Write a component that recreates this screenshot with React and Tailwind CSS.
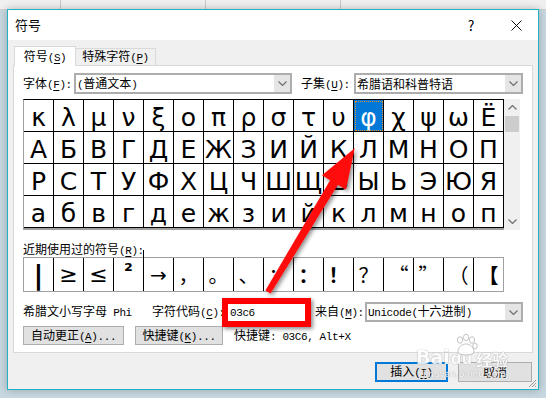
import React from 'react'

const cjk = "font-['Noto_Sans_CJK_SC',sans-serif]"
const glyph = "font-['DejaVu_Sans','Noto_Sans_CJK_SC',sans-serif]"

// CJK runs stay in the CJK face, ASCII runs get a narrow mono face; "~X" underlines X
function Txt({ t }) {
  const parts = t.split(/([\x20-\x7e]+)/).filter(Boolean)
  return (
    <span className="whitespace-pre">
      {parts.map((p, i) =>
        /^[\x20-\x7e]+$/.test(p) ? (
          <span key={i} className="font-['Liberation_Mono',monospace] text-[11px] tracking-[-0.4px]">
            {p.split(/(~.)/).filter(Boolean).map((q, j) =>
              q[0] === '~' ? (
                <span key={j} className="underline underline-offset-2">{q[1]}</span>
              ) : (
                q
              )
            )}
          </span>
        ) : (
          <span key={i}>{p}</span>
        )
      )}
    </span>
  )
}

function Chevron({ up }) {
  return (
    <svg width="9" height="5" viewBox="0 0 9 5">
      <polyline
        points={up ? '0.5,4.5 4.5,0.5 8.5,4.5' : '0.5,0.5 4.5,4.5 8.5,0.5'}
        fill="none"
        stroke="#707070"
        strokeWidth="1.2"
      />
    </svg>
  )
}

function Combo({ w, text, h = 'h-[21px]' }) {
  return (
    <div className={`flex ${h} ${w} border-2 border-[#adadad] bg-white`}>
      <div className="flex flex-1 items-center pl-[1px]">
        <Txt t={text} />
      </div>
      <div className="flex w-[16px] items-center justify-center bg-[#e5e5e5]">
        <Chevron />
      </div>
    </div>
  )
}

function Btn({ w, text, primary }) {
  return (
    <div
      className={`flex h-full ${w} items-center justify-center bg-[#e1e1e1] ${
        primary ? 'border-2 border-[#0078d7]' : 'border border-[#adadad]'
      }`}
    >
      <Txt t={text} />
    </div>
  )
}

const rows = [
  'κλμνξοπρστυφχψωЁ',
  'АБВГДЕЖЗИЙКЛМНОП',
  'РСТУФХЦЧШЩЪЫЬЭЮЯ',
  'абвгдежзийклмноп',
]

const recent = [
  { c: '|', cls: `${glyph} font-bold text-[27px]` },
  { c: '≥', cls: `${glyph} text-[22px]` },
  { c: '≤', cls: `${glyph} text-[22px]` },
  { c: '²', cls: `${glyph} font-bold text-[20px] -mt-[8px]` },
  { c: '→', cls: `${glyph} text-[20px]` },
  { c: '，', cls: `${cjk} text-[20px]` },
  { c: '。', cls: `${cjk} text-[20px]` },
  { c: '、', cls: `${cjk} text-[20px]` },
  { c: '；', cls: `${cjk} text-[20px]` },
  { c: '：', cls: `${cjk} font-bold text-[20px]` },
  { c: '！', cls: `${cjk} font-bold text-[20px]` },
  { c: '？', cls: `${cjk} text-[20px]` },
  { c: '“', cls: `${cjk} text-[20px]` },
  { c: '”', cls: `${cjk} text-[20px]` },
  { c: '（', cls: `${cjk} text-[20px]` },
  { c: '【', cls: `${cjk} font-bold text-[20px]` },
]

export default function App() {
  return (
    <div className={`relative h-[398px] w-[546px] overflow-hidden bg-[#c8d8e0] text-[12px] leading-[16px] text-black ${cjk}`}>
      {/* window behind */}
      <div className="flex h-[10px] border-b border-[#d0d0d0] bg-[#f0f0f0]">
        <div className="w-[61px] border-r border-[#c8c8c8]" />
        <div className="w-[145px] border-r border-[#c8c8c8]" />
        <div className="w-[135px] border-r border-[#c8c8c8]" />
      </div>

      {/* dialog */}
      <div className="relative ml-[7px] -mt-[1px] flex h-[381px] w-[532px] flex-col border border-[#1fb3c4] bg-[#f0f0f0] shadow-[0_0_8px_rgba(0,0,0,0.25)]">
        <div className="flex h-[30px] items-center bg-white">
          <span className="pl-[7px] text-[13px]">符号</span>
          <div className="ml-auto flex items-center gap-[15px] pr-[7px]">
            <span className="flex w-[30px] justify-center text-[14px]">?</span>
            <span className="flex w-[30px] justify-center">
              <svg width="11" height="11" viewBox="0 0 11 11">
                <path d="M0.5 0.5 L10.5 10.5 M10.5 0.5 L0.5 10.5" stroke="#111" strokeWidth="1" />
              </svg>
            </span>
          </div>
        </div>

        <div className="flex flex-col px-[5px]">
          {/* tabs */}
          <div className="flex h-[26px] items-end">
            <div className="relative z-10 ml-[1px] flex h-[20px] w-[62px] items-center justify-center border-x border-t border-[#d9d9d9] bg-white">
              <Txt t="符号(~S)" />
            </div>
            <div className="mb-[1px] flex h-[17px] w-[80px] items-center justify-center border-r border-t border-[#d9d9d9] bg-[#f0f0f0]">
              <Txt t="特殊字符(~P)" />
            </div>
          </div>

          {/* panel */}
          <div className="-mt-[1px] flex h-[288px] flex-col border border-[#d9d9d9] bg-white pl-[9px] pr-[5px]">
            <div className="mt-[7px] flex h-[21px] items-center">
              <div className="w-[51px]">
                <Txt t="字体(~F):" />
              </div>
              <Combo w="w-[218px]" text="(普通文本)" />
              <div className="ml-[9px] w-[53px]">
                <Txt t="子集(~U):" />
              </div>
              <Combo w="w-[169px]" text="希腊语和科普特语" />
            </div>

            {/* symbol grid */}
            <div className="mt-[5px] flex h-[131px]">
              <div className="border-b-2 border-l border-t border-b-[#a0a0a0] border-l-[#a0a0a0] border-t-black">
                <div className="grid grid-cols-[repeat(16,30px)]">
                  {rows.map((r, ri) =>
                    [...r].map((ch, ci) => {
                      const sel = ri === 0 && ci === 11
                      return (
                        <div
                          key={`${ri}-${ci}`}
                          className={`flex h-[32px] items-end justify-center border-b border-r border-black pb-[1px] text-[25px] leading-none ${glyph} ${
                            sel ? 'bg-[#0078d7] text-white outline-1 -outline-offset-2 outline-dotted outline-[#e0902c]' : ''
                          }`}
                        >
                          {ch}
                        </div>
                      )
                    })
                  )}
                </div>
              </div>
              <div className="flex w-[16px] flex-col bg-[#f0f0f0]">
                <div className="flex h-[17px] items-center justify-center">
                  <Chevron up />
                </div>
                <div className="mx-[1px] h-[16px] bg-[#cdcdcd]" />
                <div className="flex-1" />
                <div className="flex h-[17px] items-center justify-center">
                  <Chevron />
                </div>
              </div>
            </div>

            <div className="mt-[11px] h-[16px]">
              <Txt t="近期使用过的符号(~R):" />
            </div>
            <div className="flex h-[35px] w-fit border-y border-l border-[#a0a0a0]">
              {recent.map((r, i) => (
                <div
                  key={i}
                  className={`flex w-[30px] items-center justify-center border-r leading-none ${
                    i === 15 ? 'border-[#a0a0a0]' : 'border-black'
                  } ${r.cls}`}
                >
                  {r.c}
                </div>
              ))}
            </div>

            <div className="mt-[10px] flex h-[20px] items-center">
              <div className="w-[129px]">
                <Txt t="希腊文小写字母 Phi" />
              </div>
              <div className="w-[73px]">
                <Txt t="字符代码(~C):" />
              </div>
              <div className="flex h-[20px] w-[82px] items-center border border-[#7a7a7a] bg-white pl-[4px]">
                <Txt t="03c6" />
              </div>
              <div className="ml-[8px] w-[50px]">
                <Txt t="来自(~M):" />
              </div>
              <Combo w="w-[158px]" h="h-[20px]" text="Unicode(十六进制)" />
            </div>

            <div className="mt-[4px] flex h-[19px] items-center">
              <Btn w="w-[101px]" text="自动更正(~A)..." />
              <div className="ml-[11px] h-full">
                <Btn w="w-[88px]" text="快捷键(~K)..." />
              </div>
              <div className="ml-[11px]">
                <Txt t="快捷键: 03C6, Alt+X" />
              </div>
            </div>
          </div>

          <div className="mr-[1px] mt-[9px] flex h-[20px] justify-end gap-[10px]">
            <Btn w="w-[73px]" text="插入(~I)" primary />
            <Btn w="w-[74px]" text="取消" />
          </div>
        </div>

        {/* resize grip */}
        <svg className="absolute bottom-[1px] right-[1px]" width="10" height="10" viewBox="0 0 10 10">
          <path d="M9 2 L2 9 M9 5 L5 9 M9 8 L8 9" stroke="#9a9a9a" strokeWidth="1" />
        </svg>
      </div>

      {/* baidu watermark */}
      <div className="pointer-events-none absolute left-[416px] top-[348px] text-white opacity-85 [text-shadow:0_0_1px_#a0a0a0,0_0_1px_#a0a0a0]">
        <div className="relative flex items-end leading-none">
          <span className="font-['DejaVu_Sans'] text-[19px] font-bold">Bai</span>
          <span className="ml-[1px] font-['DejaVu_Sans'] text-[15px] font-bold">du</span>
          <span className={`ml-[4px] text-[16px] font-bold ${cjk}`}>经验</span>
          <svg className="absolute left-[38px] top-[-14px]" width="24" height="24" viewBox="0 0 24 24">
            <g fill="white" stroke="#a8a8a8" strokeWidth="0.8">
              <ellipse cx="6" cy="6" rx="2.6" ry="3.3" />
              <ellipse cx="12" cy="3.5" rx="2.6" ry="3.2" />
              <ellipse cx="18" cy="6" rx="2.6" ry="3.3" />
              <ellipse cx="21" cy="12" rx="2.3" ry="2.8" />
              <path d="M4 18 C4 13 8 10 12 10 C16 10 20 13 20 18 C20 22 4 22 4 18 Z" />
            </g>
          </svg>
        </div>
        <div className="ml-[7px] mt-[3px] font-['DejaVu_Sans'] text-[9px] leading-none">jingyan.baidu.com</div>
      </div>

      {/* annotations */}
      <div className="pointer-events-none absolute left-[222px] top-[298px] h-[29px] w-[89px] border-[6px] border-[#ff0000] shadow-[2px_2px_4px_rgba(0,0,0,0.45)]" />
      <svg className="pointer-events-none absolute left-0 top-0" width="546" height="398" viewBox="0 0 546 398">
        <defs>
          <filter id="sh" x="-20%" y="-20%" width="140%" height="140%">
            <feDropShadow dx="2" dy="2" stdDeviation="2" floodColor="#000" floodOpacity="0.45" />
          </filter>
        </defs>
        <polygon
          filter="url(#sh)"
          fill="#ff1010"
          points="265.4,290.4 330.1,180.2 322,175.3 354.7,148.3 346,189.7 337.9,184.8 270.6,293.6"
        />
      </svg>
    </div>
  )
}
